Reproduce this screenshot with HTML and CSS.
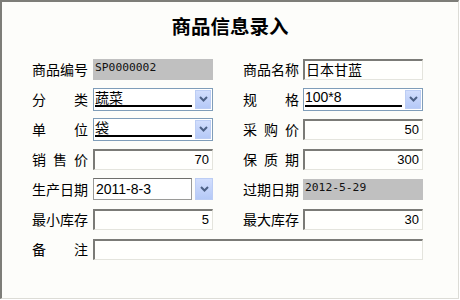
FILE: index.html
```html
<!DOCTYPE html>
<html lang="zh-CN">
<head>
<meta charset="utf-8">
<title>商品信息录入</title>
<link rel="stylesheet" href="styles.css">
</head>
<body>
<div class="window">
  <h1 class="title">商品信息录入</h1>
  <div class="form">
    <div class="row">
      <div class="group left">
        <span class="lbl"><span>商</span><span>品</span><span>编</span><span>号</span></span>
        <div class="field ro">SP0000002</div>
      </div>
      <div class="group right">
        <span class="lbl"><span>商</span><span>品</span><span>名</span><span>称</span></span>
        <div class="field sunken cjk">日本甘蓝</div>
      </div>
    </div>
    <div class="row">
      <div class="group left">
        <span class="lbl"><span>分</span><span>类</span></span>
        <div class="field combo"><span class="val cjk">蔬菜</span><span class="btn"><svg width="9" height="6" viewBox="0 0 9 6"><path d="M1 1 L4.5 4.5 L8 1" fill="none" stroke="#4d6185" stroke-width="2"/></svg></span></div>
      </div>
      <div class="group right">
        <span class="lbl"><span>规</span><span>格</span></span>
        <div class="field combo"><span class="val lat">100*8</span><span class="btn"><svg width="9" height="6" viewBox="0 0 9 6"><path d="M1 1 L4.5 4.5 L8 1" fill="none" stroke="#4d6185" stroke-width="2"/></svg></span></div>
      </div>
    </div>
    <div class="row">
      <div class="group left">
        <span class="lbl"><span>单</span><span>位</span></span>
        <div class="field combo"><span class="val cjk">袋</span><span class="btn"><svg width="9" height="6" viewBox="0 0 9 6"><path d="M1 1 L4.5 4.5 L8 1" fill="none" stroke="#4d6185" stroke-width="2"/></svg></span></div>
      </div>
      <div class="group right">
        <span class="lbl"><span>采</span><span>购</span><span>价</span></span>
        <div class="field sunken num">50</div>
      </div>
    </div>
    <div class="row">
      <div class="group left">
        <span class="lbl"><span>销</span><span>售</span><span>价</span></span>
        <div class="field sunken num">70</div>
      </div>
      <div class="group right">
        <span class="lbl"><span>保</span><span>质</span><span>期</span></span>
        <div class="field sunken num">300</div>
      </div>
    </div>
    <div class="row">
      <div class="group left">
        <span class="lbl"><span>生</span><span>产</span><span>日</span><span>期</span></span>
        <div class="date">
          <div class="datebox">2011-8-3</div>
          <span class="btn datebtn"><svg width="9" height="6" viewBox="0 0 9 6"><path d="M1 1 L4.5 4.5 L8 1" fill="none" stroke="#4d6185" stroke-width="2"/></svg></span>
        </div>
      </div>
      <div class="group right">
        <span class="lbl"><span>过</span><span>期</span><span>日</span><span>期</span></span>
        <div class="field ro">2012-5-29</div>
      </div>
    </div>
    <div class="row">
      <div class="group left">
        <span class="lbl"><span>最</span><span>小</span><span>库</span><span>存</span></span>
        <div class="field sunken num">5</div>
      </div>
      <div class="group right">
        <span class="lbl"><span>最</span><span>大</span><span>库</span><span>存</span></span>
        <div class="field sunken num">30</div>
      </div>
    </div>
    <div class="row">
      <div class="group left">
        <span class="lbl"><span>备</span><span>注</span></span>
        <div class="field sunken wide"></div>
      </div>
    </div>
  </div>
</div>
</body>
</html>
```
FILE: styles.css
```css
body {
  margin: 0;
  background: #ffffff;
}

.window {
  width: 456px;
  height: 296px;
  border-top: 2px solid #7d7d78;
  border-left: 2px solid #7d7d78;
  border-right: 1px solid #dcdcd6;
  border-bottom: 1px solid #dcdcd6;
  background: #fdfdfa;
  font-family: "Noto Sans CJK SC", sans-serif;
  color: #000;
}

.title {
  margin: 0;
  height: 48px;
  line-height: 48px;
  text-align: center;
  font-size: 19.5px;
  font-weight: 700;
}

.form {
  padding: 4px 0 0 30px;
}

.row {
  display: flex;
  align-items: center;
  height: 30px;
  gap: 30px;
}

.group {
  display: flex;
  align-items: center;
}

.lbl {
  display: flex;
  justify-content: space-between;
  width: 56px;
  font-size: 14px;
  line-height: 16px;
}

.left .lbl {
  margin-right: 5px;
}

.right .lbl {
  margin-right: 4px;
}

.field {
  width: 120px;
  box-sizing: border-box;
}

.field.wide {
  width: 330px;
}

.ro {
  height: 21px;
  background: #c0c0c0;
  padding: 1px 2px 0 2px;
  font-family: "DejaVu Sans Mono", monospace;
  font-size: 11.3px;
  line-height: 15px;
  color: #111;
}

.sunken {
  height: 21px;
  border-top: 2px solid #7b7b77;
  border-left: 2px solid #7b7b77;
  border-right: 1px solid #e4e4dd;
  border-bottom: 1px solid #e4e4dd;
  background: #fffffd;
}

.sunken.cjk {
  font-size: 14px;
  line-height: 17px;
  padding-left: 1px;
}

.sunken.num {
  font-family: "Liberation Sans", sans-serif;
  font-size: 13px;
  line-height: 18px;
  text-align: right;
  padding-right: 3px;
}

.combo {
  height: 23px;
  border: 1px solid #7f9db9;
  background: #fff;
  display: flex;
  align-items: stretch;
}

.combo .val {
  flex: 1;
  height: 16px;
  line-height: 16px;
  border-bottom: 2px solid #000;
  margin: 0 3px 0 1px;
  font-size: 14px;
  white-space: nowrap;
}

.combo .val.lat {
  font-family: "Liberation Sans", sans-serif;
  line-height: 17px;
}

.btn {
  width: 16px;
  box-sizing: border-box;
  border: 1px solid #bccdf4;
  background: linear-gradient(#d2defd, #b5c9f7);
  display: flex;
  align-items: center;
  justify-content: center;
}

.combo .btn {
  margin: 1px 1px 1px 0;
}

.date {
  display: flex;
  align-items: stretch;
  width: 120px;
  height: 22px;
}

.datebox {
  width: 99px;
  box-sizing: border-box;
  border: 1px solid #9a9a98;
  border-top-color: #6f6f6c;
  background: #fff;
  font-family: "Liberation Sans", sans-serif;
  font-size: 14px;
  line-height: 20px;
  padding-left: 2px;
}

.datebtn {
  width: 18px;
  margin-left: 3px;
}
```
